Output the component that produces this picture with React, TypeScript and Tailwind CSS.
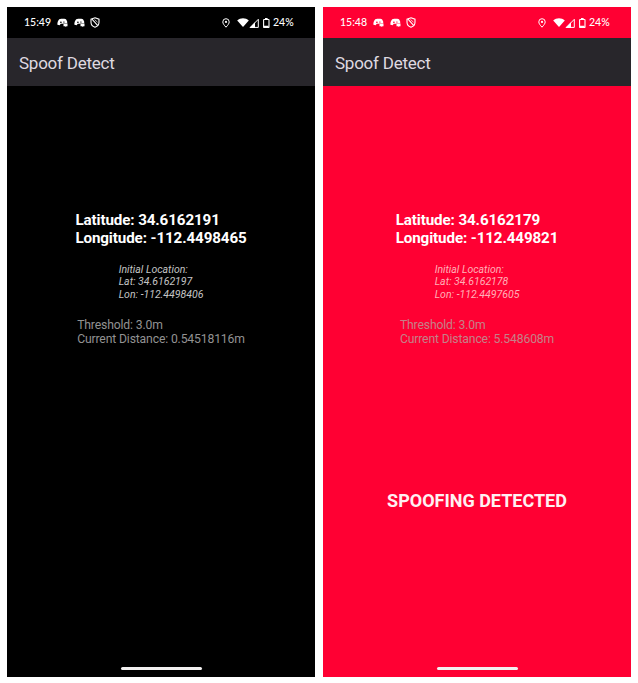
import React from "react";

type Reading = {
  time: string;
  latitude: string;
  longitude: string;
  initialLat: string;
  initialLon: string;
  distance: string;
  spoofed: boolean;
};

const readings: Reading[] = [
  {
    time: "15:49",
    latitude: "34.6162191",
    longitude: "-112.4498465",
    initialLat: "34.6162197",
    initialLon: "-112.4498406",
    distance: "0.54518116m",
    spoofed: false,
  },
  {
    time: "15:48",
    latitude: "34.6162179",
    longitude: "-112.449821",
    initialLat: "34.6162178",
    initialLon: "-112.4497605",
    distance: "5.548608m",
    spoofed: true,
  },
];

function ChatIcon({ hole }: { hole: string }) {
  return (
    <svg width="11" height="9" viewBox="0 0 11 9" fill="currentColor">
      <path d="M2.200 1.200 4.200.7h3.200L9 1.200 10.200 3.400v1.800H6.500v.6H3.700L2.700 7.300.4 6.800C.2 4.600.9 2.700 2.200 1.200Z" />
      <ellipse cx="3.900" cy="4.200" rx=".9" ry=".8" fill={hole} />
      <ellipse cx="6.900" cy="3.900" rx=".8" ry=".5" fill={hole} />
      <path d="M6.500 5.400h4v2.800H9.500L8.700 9l-.5-.8H6.500Z" />
    </svg>
  );
}

function ShieldIcon() {
  return (
    <svg width="10" height="11" viewBox="0 0 10 11" fill="none" stroke="currentColor" strokeWidth="1.1">
      <path d="M5 .8 9 2.200v3C9 7.500 7.300 9.400 5 10.200 2.700 9.400 1 7.500 1 5.200v-3Z" />
      <path d="M2 2.200 7.600 8.400" />
      <path d="M4.500 2.500 7.500 5.200" strokeWidth=".7" />
    </svg>
  );
}

function PinIcon() {
  return (
    <svg width="8" height="10" viewBox="0 0 8 10" fill="none" stroke="currentColor" strokeWidth="1">
      <path d="M4 9.200C2 7 .8 5.500.8 3.900a3.200 3.200 0 0 1 6.400 0C7.200 5.500 6 7 4 9.200Z" />
      <circle cx="4" cy="3.900" r="1.100" fill="currentColor" stroke="none" />
    </svg>
  );
}

function WifiIcon() {
  return (
    <svg width="12" height="9" viewBox="0 0 12 9" fill="currentColor">
      <path d="M.2 2.400C3.500-.4 8.500-.4 11.800 2.400L6 9Z" />
    </svg>
  );
}

function SignalIcon() {
  return (
    <svg width="10" height="10" viewBox="0 0 10 10">
      <path d="M1.300 9.400 9.300 1.300v8.100Z" fill="none" stroke="currentColor" strokeWidth="1" />
      <path d="M.5 9.900 6 4.300V9.900Z" fill="currentColor" />
    </svg>
  );
}

function BatteryIcon() {
  return (
    <svg width="7" height="10" viewBox="0 0 7 10">
      <rect x=".6" y="1.500" width="5.400" height="8" rx=".5" fill="none" stroke="currentColor" strokeWidth="1.100" />
      <path d="M2 0h2.600v1.500H2ZM1 7.700h4.600V9.500H1Z" fill="currentColor" />
    </svg>
  );
}

function Phone({ reading }: { reading: Reading }) {
  const hole = reading.spoofed ? "#ff0033" : "#000000";
  return (
    <section
      className={`flex h-[670px] w-[308px] flex-col items-center whitespace-nowrap ${
        reading.spoofed ? "bg-[#ff0033]" : "bg-black"
      }`}
    >
      <div className="flex h-[31px] w-full items-center pl-[17px] pr-[21px] text-white">
        <span className="w-[33px] font-[Lato,sans-serif] text-[10.5px] font-medium leading-none">
          {reading.time}
        </span>
        <div className="flex items-center gap-[5.5px]">
          <ChatIcon hole={hole} />
          <ChatIcon hole={hole} />
          <ShieldIcon />
        </div>
        <div className="ml-auto flex items-center">
          <PinIcon />
          <span className="ml-[7px] flex"><WifiIcon /></span>
          <span className="flex"><SignalIcon /></span>
          <span className="ml-[4px] flex"><BatteryIcon /></span>
          <span className="ml-[3px] w-[21px] font-[Lato,sans-serif] text-[10.5px] font-medium leading-none">24%</span>
        </div>
      </div>
      <header className="flex h-12 w-full items-center bg-[#28262b] pl-3 pt-[2px]">
        <h1 className="font-[Roboto,sans-serif] text-[17px] leading-5 tracking-[-0.24px] text-[#dfd9e0]">
          Spoof Detect
        </h1>
      </header>
      <main className="flex flex-1 flex-col items-center font-[Roboto,sans-serif]">
        <div className="mt-[126px] text-[15.2px] font-bold leading-[17.5px] tracking-[-0.12px] text-white">
          <p>Latitude: {reading.latitude}</p>
          <p>Longitude: {reading.longitude}</p>
        </div>
        <div
          className={`mt-[17px] text-[10.5px] italic leading-[12.3px] ${
            reading.spoofed ? "text-[#ffb0b8]" : "text-[#c4c4c4]"
          }`}
        >
          <p>Initial Location:</p>
          <p>Lat: {reading.initialLat}</p>
          <p>Lon: {reading.initialLon}</p>
        </div>
        <div
          className={`mt-[17px] text-[12.2px] leading-[14.2px] tracking-[-0.15px] ${
            reading.spoofed ? "text-[#c58088]" : "text-[#929292]"
          }`}
        >
          <p>Threshold: 3.0m</p>
          <p>Current Distance: {reading.distance}</p>
        </div>
        {reading.spoofed && (
          <p className="mt-[144px] text-[18px] font-bold leading-[22px] text-[#fff0f2]">SPOOFING DETECTED</p>
        )}
      </main>
      <div className="mb-[7px] h-[3px] w-[81px] rounded-full bg-[#f2f0f0]" />
    </section>
  );
}

export default function App() {
  return (
    <div className="flex h-[683px] w-[638px] gap-2 bg-white p-[7px]">
      {readings.map((reading) => (
        <Phone key={reading.time} reading={reading} />
      ))}
    </div>
  );
}
